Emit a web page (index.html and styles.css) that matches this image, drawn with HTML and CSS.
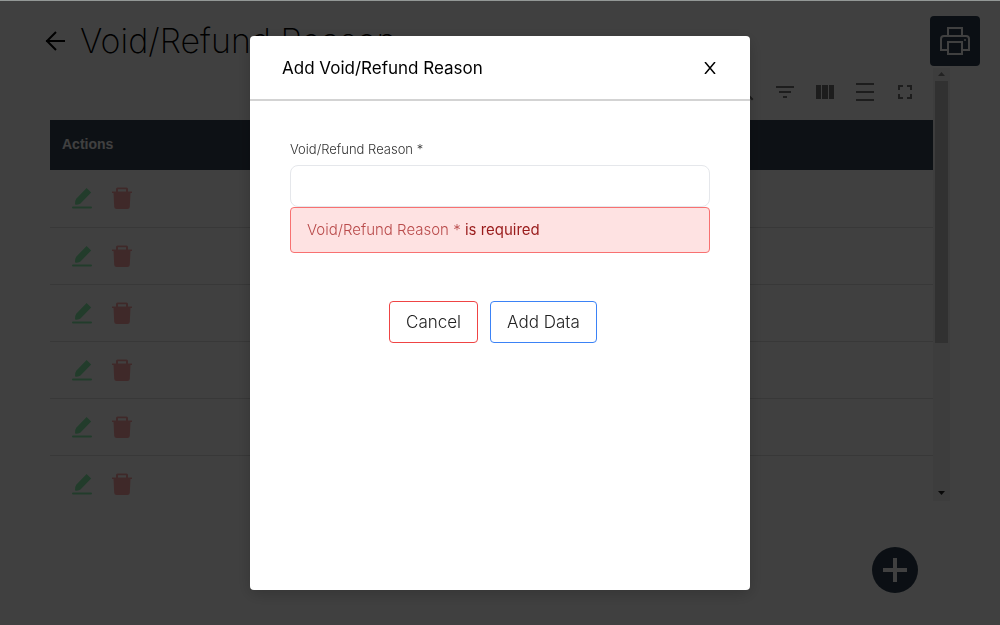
FILE: index.html
```html
<!DOCTYPE html>
<html lang="en">
<head>
<meta charset="utf-8">
<meta name="viewport" content="width=device-width, initial-scale=1">
<title>Void/Refund Reason</title>
<link rel="stylesheet" href="styles.css">
</head>
<body>
<svg class="sprite" aria-hidden="true">
  <symbol id="edit" viewBox="0 0 24 24"><path d="M3 20.500h18q1 0 1 1t-1 1H3q-1 0-1-1t1-1zM16.600 2l4.600 4.500L10.500 17.500Q9 19 5 18.500q-.2-4 1.200-5.800z"/></symbol>
  <symbol id="trash" viewBox="0 0 24 24"><path fill-rule="evenodd" d="M6 3q0-1.500 1.500-1.500h9q1.500 0 1.500 1.500v2.500h4V7h-1.500l-.7 14q-.2 2-2.200 2H6.400q-2 0-2.200-2L3.500 7H2V5.500h4zm2 .3v2.200h8V3.300z"/></symbol>
</svg>
<div class="page">
  <header class="page-header">
    <button class="icon-button back" aria-label="Back"><svg viewBox="0 0 20 20"><path d="M11 1 2 10l9 9M1 10h19" fill="none" stroke="currentColor" stroke-width="2"/></svg></button>
    <h1 class="page-title">Void/Refund Reason</h1>
    <button class="print" aria-label="Print"><svg viewBox="0 0 30 30"><path d="M8 9V2h14v7M8 24H1V13q0-3 3-3h22q3 0 3 3v11h-7M8 16h14v12H8z" fill="none" stroke="currentColor" stroke-width="2"/><circle cx="25" cy="14" r="1"/></svg></button>
  </header>
  <main class="list">
    <div class="list-content">
      <div class="toolbar">
        <button class="icon-button" aria-label="Search"><svg viewBox="0 0 24 24"><path d="M15.500 14h-.8l-.3-.3A6.500 6.500 0 1 0 13.700 14.400l.3.300v.8l5 5 1.500-1.500zM9.500 14a4.500 4.500 0 1 1 0-9 4.500 4.500 0 0 1 0 9z"/></svg></button>
        <button class="icon-button" aria-label="Filters"><svg viewBox="0 0 24 24"><path d="M10 18h4v-2h-4zM3 6v2h18V6zm3 7h12v-2H6z"/></svg></button>
        <button class="icon-button" aria-label="Columns"><svg viewBox="0 0 24 24"><path d="M3 5h5v14H3zM9 5h6v14H9zM16 5h5v14h-5z"/></svg></button>
        <button class="icon-button" aria-label="Density"><svg viewBox="0 0 24 24"><path d="M3 3h18v2H3zM3 11h18v2H3zM3 19h18v2H3z"/></svg></button>
        <button class="icon-button" aria-label="Full screen"><svg viewBox="0 0 24 24"><path d="M7 14H5v5h5v-2H7zM5 10h2V7h3V5H5zm12 7h-3v2h5v-5h-2zM14 5v2h3v3h2V5z"/></svg></button>
      </div>
      <table class="table">
        <thead><tr><th scope="col">Actions</th></tr></thead>
        <tbody>
          <tr><td><div class="actions"><button class="icon-button edit" aria-label="Edit"><svg><use href="#edit"/></svg></button><button class="icon-button trash" aria-label="Delete"><svg><use href="#trash"/></svg></button></div></td></tr>
          <tr><td><div class="actions"><button class="icon-button edit" aria-label="Edit"><svg><use href="#edit"/></svg></button><button class="icon-button trash" aria-label="Delete"><svg><use href="#trash"/></svg></button></div></td></tr>
          <tr><td><div class="actions"><button class="icon-button edit" aria-label="Edit"><svg><use href="#edit"/></svg></button><button class="icon-button trash" aria-label="Delete"><svg><use href="#trash"/></svg></button></div></td></tr>
          <tr><td><div class="actions"><button class="icon-button edit" aria-label="Edit"><svg><use href="#edit"/></svg></button><button class="icon-button trash" aria-label="Delete"><svg><use href="#trash"/></svg></button></div></td></tr>
          <tr><td><div class="actions"><button class="icon-button edit" aria-label="Edit"><svg><use href="#edit"/></svg></button><button class="icon-button trash" aria-label="Delete"><svg><use href="#trash"/></svg></button></div></td></tr>
          <tr><td><div class="actions"><button class="icon-button edit" aria-label="Edit"><svg><use href="#edit"/></svg></button><button class="icon-button trash" aria-label="Delete"><svg><use href="#trash"/></svg></button></div></td></tr>
        </tbody>
      </table>
    </div>
    <div class="scrollbar" aria-hidden="true"><svg class="arrow arrow-up" viewBox="0 0 7 4"><path d="M0 4 3.500 0 7 4z"/></svg><div class="thumb"></div><svg class="arrow arrow-down" viewBox="0 0 7 4"><path d="M0 0 3.500 4 7 0z"/></svg></div>
  </main>
  <button class="add" aria-label="Add reason"><svg viewBox="0 0 24 24"><path d="M10 0h4v10h10v4H14v10h-4V14H0v-4h10z"/></svg></button>
</div>
<div class="overlay">
  <div class="dialog" role="dialog" aria-modal="true" aria-labelledby="dialog-title">
    <div class="dialog-header">
      <h2 class="dialog-title" id="dialog-title">Add Void/Refund Reason</h2>
      <button class="close" aria-label="Close"><svg viewBox="0 0 12 12"><path d="M1 0 11 12M11 0 1 12" fill="none" stroke="currentColor" stroke-width="1.500"/></svg></button>
    </div>
    <form class="form">
      <label class="label" for="reason">Void/Refund Reason *</label>
      <input class="input" id="reason" type="text" aria-describedby="reason-error">
      <p class="error" id="reason-error">Void/Refund Reason * <strong>is required</strong></p>
      <div class="buttons">
        <button class="button cancel" type="button">Cancel</button>
        <button class="button submit" type="button">Add Data</button>
      </div>
    </form>
  </div>
</div>
</body>
</html>
```
FILE: styles.css
```css
* { box-sizing: border-box; }
body { margin: 0; background: #fff; color: #000; font-family: Inter, "Open Sans", sans-serif; font-weight: 300; }
button { margin: 0; padding: 0; border: 0; background: none; color: inherit; font: inherit; cursor: pointer; }
svg { display: block; fill: currentColor; }
.sprite { position: absolute; width: 0; height: 0; }
.page { height: 100vh; overflow: hidden; display: flex; flex-direction: column; }
.page-header { display: flex; align-items: center; height: 68px; padding: 14px 20px 0 45px; }
.back svg { width: 20px; height: 20px; }
.page-title { flex: 1; margin: 0 0 0 15px; font-size: 34px; line-height: 40px; font-weight: 200; }
.print { display: grid; place-items: center; width: 50px; height: 50px; border-radius: 4px; background: #2d3e50; color: #fff; }
.print svg { width: 30px; height: 30px; }
.list { flex: none; display: flex; height: 433px; margin: 0 50px; overflow: hidden; }
.list-content { flex: 1; min-width: 0; }
.toolbar { display: flex; justify-content: flex-end; gap: 16px; height: 52px; padding: 12px 16px 16px; color: #757575; }
.toolbar svg, .actions svg { width: 24px; height: 24px; }
.table { width: 100%; border-collapse: collapse; }
.table th { height: 50px; padding: 0 12px 2px; background: #364454; color: #fff; font: bold 14px/20px "Liberation Sans", Arial, sans-serif; text-align: left; }
.table td { height: 57px; padding: 0 20px; border-bottom: 1px solid #ddd; }
.actions { display: flex; gap: 16px; }
.edit { color: #86efac; }
.trash { color: #fca5a5; }
.scrollbar { flex: none; display: flex; flex-direction: column; align-items: center; width: 17px; padding-top: 4px; padding-bottom: 6px; background: #f1f1f1; }
.arrow { width: 7px; height: 4px; }
.arrow-up { color: #888; }
.arrow-down { color: #222; margin-top: auto; }
.thumb { width: 13px; height: 262px; margin-top: 5px; background: #c1c1c1; }
.add { display: grid; place-items: center; align-self: flex-end; width: 46px; height: 46px; margin: 46px 82px 0 0; border-radius: 50%; background: #2d3e50; color: #fff; }
.add svg { width: 24px; height: 24px; }
.overlay { position: fixed; inset: 0; display: flex; justify-content: center; align-items: flex-start; padding: 36px 0 35px; background: linear-gradient(#939896 1px, rgba(0, 0, 0, .75) 1px); }
.dialog { width: 50%; height: 100%; min-height: 360px; border-radius: 4px; background: #fff; box-shadow: 0 4px 16px rgba(0, 0, 0, .2); }
.dialog-header { display: flex; align-items: center; justify-content: space-between; height: 65px; padding: 0 32px; border-bottom: 2px solid #d3d3d3; }
.dialog-title { margin: 0; font-size: 17px; line-height: 24px; font-weight: 400; }
.close { display: grid; place-items: center; width: 16px; height: 24px; }
.close svg { width: 12px; height: 12px; }
.form { display: flex; flex-direction: column; padding: 38px 40px; }
.label { align-self: flex-start; margin-bottom: 6px; color: #333; font-size: 13px; line-height: 20px; }
.input { width: 100%; height: 42px; padding: 8px 16px; border: 1px solid #e5e7eb; border-radius: 8px; background: #fff; font: inherit; outline: 0; }
.error { margin: 0; padding: 12px 16px; border: 1px solid #f87171; border-radius: 4px; background: #fee2e2; color: #b94a4a; font-size: 15px; line-height: 20px; }
.error strong { color: #991b1b; font-weight: 400; }
.buttons { display: flex; gap: 12px; margin: 48px 0 0 99px; }
.button { padding: 8px 16px; border: 1px solid; border-radius: 4px; color: #222; font-size: 17px; line-height: 24px; }
.cancel { border-color: #ef4444; }
.submit { border-color: #3b82f6; }
```
